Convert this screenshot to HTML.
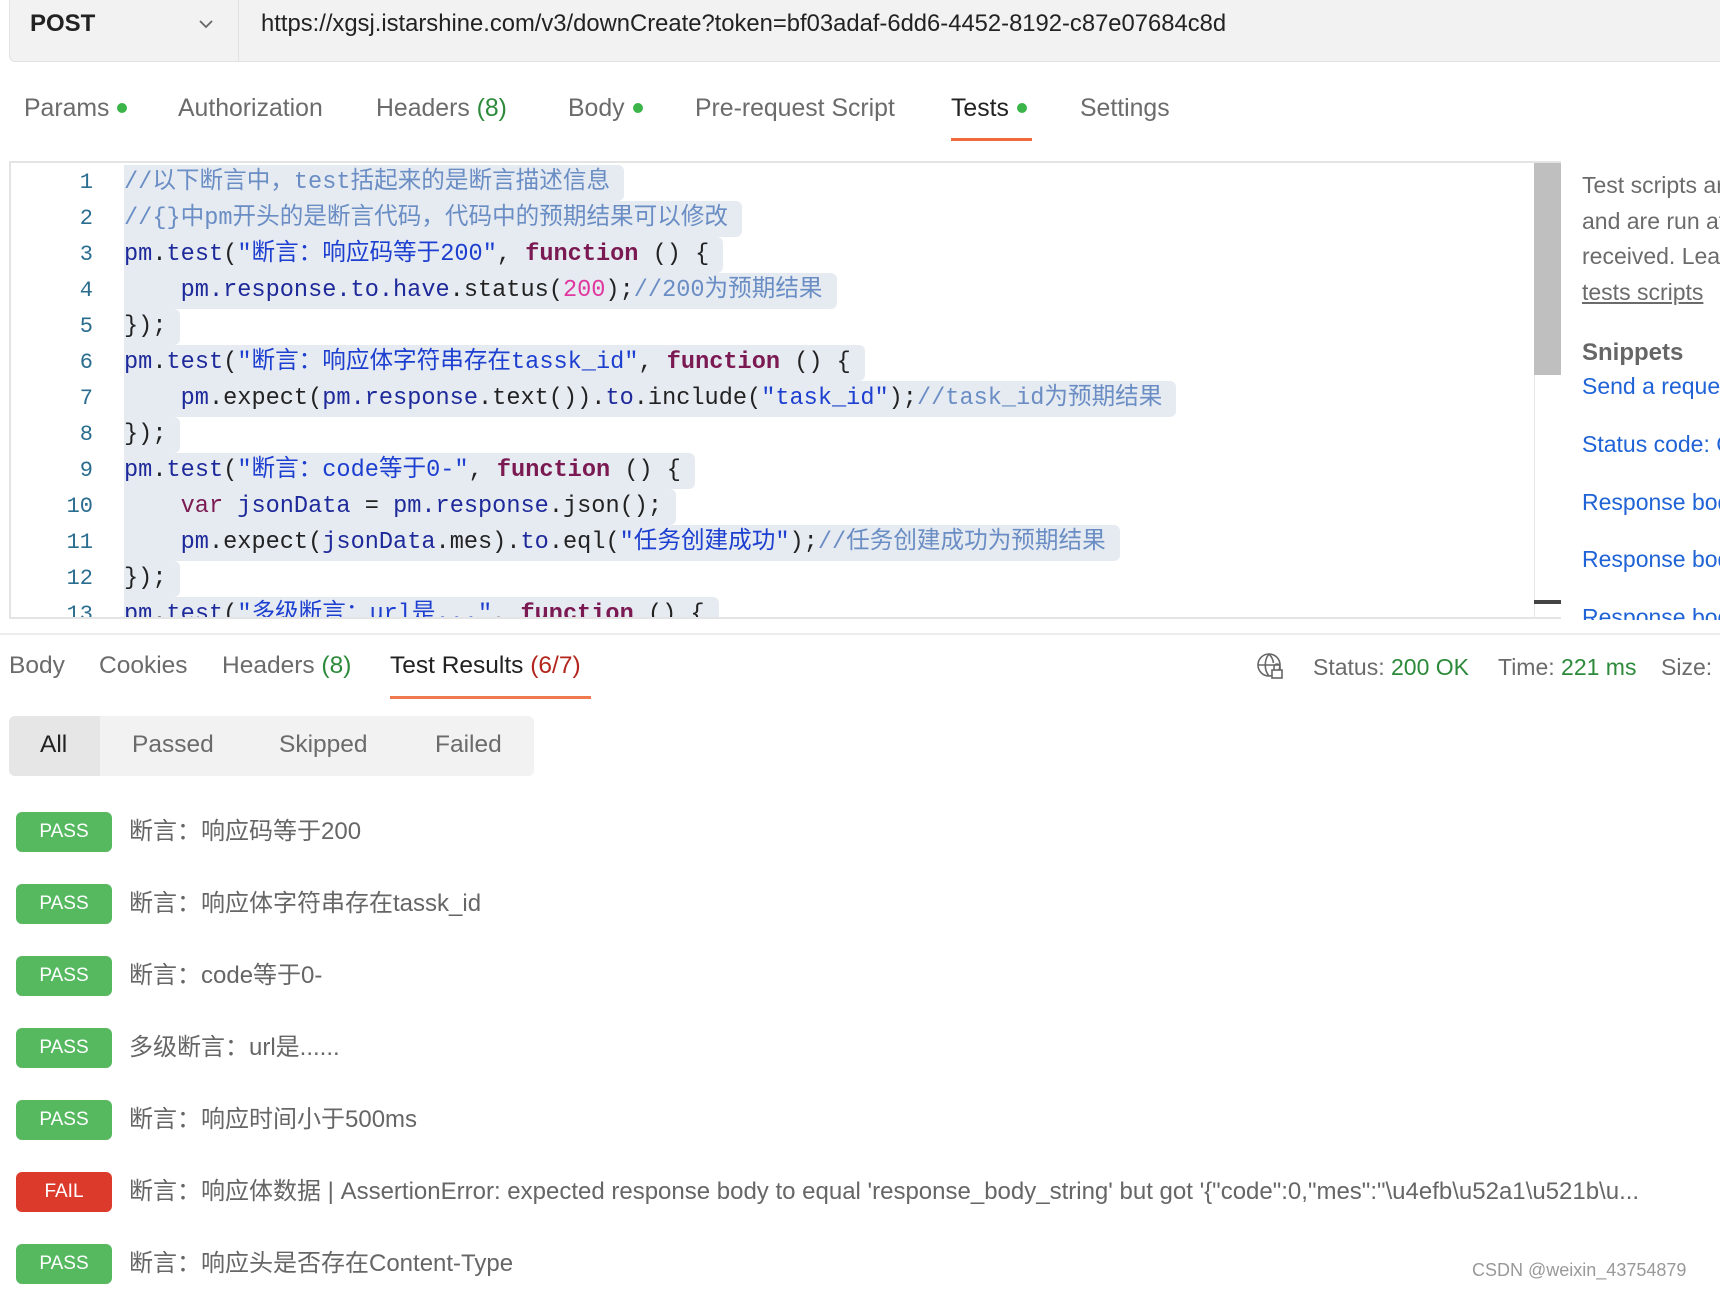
<!DOCTYPE html>
<html><head><meta charset="utf-8"><style>
*{margin:0;padding:0;box-sizing:border-box}
html,body{width:1720px;height:1290px;overflow:hidden}
body{background:#fff;position:relative;font-family:"Liberation Sans","Noto Sans CJK SC",sans-serif;color:#555}
#w{position:absolute;left:0;top:0;width:1720px;height:1290px;overflow:hidden}
.abs{position:absolute;white-space:nowrap}
.urlbar{left:9px;top:-4px;width:1711px;height:66px;background:#f2f2f2;border:1px solid #e2e2e2;border-right:none;border-radius:6px 0 0 6px}
.tab{position:absolute;top:95px;font-size:24.8px;color:#6b6b6b}
.dot{display:inline-block;width:10px;height:10px;border-radius:50%;background:#3bb54a;margin-left:8px;vertical-align:3px}
.g{color:#2d8a3a}
.editor{left:9px;top:161px;width:1552px;height:458px;border:2px solid #e4e4e4;border-right:none;overflow:hidden}
.code{position:absolute;left:0;top:0;font-family:"Liberation Mono","Noto Sans CJK SC",monospace;font-size:23.6px}
.ln{position:absolute;left:40px;width:42px;text-align:right;color:#2a6d8f;font-size:22px;line-height:36px}
.cl{position:absolute;left:113px;height:36px;line-height:36px;background:#e6ebf2;padding-right:14px;border-radius:0 6px 6px 0;color:#222;white-space:pre}
.c{color:#6a8dc4}.p{color:#1e2a9a}.s{color:#1d3fd0}.k{color:#7b1a52;font-weight:bold}.n{color:#e0379f}
.rtab{position:absolute;top:652px;font-size:24.5px;color:#6b6b6b}
.badge{position:absolute;left:16px;width:96px;height:40px;border-radius:6px;background:#56b960;color:#fff;font-size:19px;text-align:center;line-height:40px}
.rt{position:absolute;left:129px;font-size:24px;color:#666;line-height:40px;white-space:nowrap}
.side{font-size:23px}
</style></head><body><div id="w">
<div class="abs urlbar"></div>
<div class="abs" style="left:238px;top:0;width:1px;height:62px;background:#e2e2e2"></div>
<div class="abs" style="left:30px;top:10px;font-size:24px;font-weight:bold;color:#222">POST</div>
<svg class="abs" style="left:198px;top:18px" width="16" height="12"><path d="M2 3l6 6 6-6" fill="none" stroke="#666" stroke-width="1.8"/></svg>
<div class="abs" style="left:261px;top:10px;font-size:23.8px;color:#222">https://xgsj.istarshine.com/v3/downCreate?token=bf03adaf-6dd6-4452-8192-c87e07684c8d</div>

<div class="tab" style="left:24px">Params<span class="dot"></span></div>
<div class="tab" style="left:178px">Authorization</div>
<div class="tab" style="left:376px">Headers <span class="g">(8)</span></div>
<div class="tab" style="left:568px">Body<span class="dot"></span></div>
<div class="tab" style="left:695px">Pre-request Script</div>
<div class="tab" style="left:951px;color:#222">Tests<span class="dot"></span></div>
<div class="tab" style="left:1080px">Settings</div>
<div class="abs" style="left:951px;top:138px;width:81px;height:3px;background:#ef6a3c"></div>

<div class="abs editor">
<div class="code">
<div class="ln" style="top:2px">1</div><div class="ln" style="top:38px">2</div><div class="ln" style="top:74px">3</div><div class="ln" style="top:110px">4</div><div class="ln" style="top:146px">5</div><div class="ln" style="top:182px">6</div><div class="ln" style="top:218px">7</div><div class="ln" style="top:254px">8</div><div class="ln" style="top:290px">9</div><div class="ln" style="top:326px">10</div><div class="ln" style="top:362px">11</div><div class="ln" style="top:398px">12</div><div class="ln" style="top:434px">13</div>
<div class="cl" style="top:2px"><span class="c">//以下断言中，test括起来的是断言描述信息</span></div>
<div class="cl" style="top:38px"><span class="c">//{}中pm开头的是断言代码，代码中的预期结果可以修改</span></div>
<div class="cl" style="top:74px"><span class="p">pm</span>.<span class="p">test</span>(<span class="s">"断言：响应码等于200"</span>, <span class="k">function</span> () {</div>
<div class="cl" style="top:110px">    <span class="p">pm.response.to.have</span>.status(<span class="n">200</span>);<span class="c">//200为预期结果</span></div>
<div class="cl" style="top:146px">});</div>
<div class="cl" style="top:182px"><span class="p">pm</span>.<span class="p">test</span>(<span class="s">"断言：响应体字符串存在tassk_id"</span>, <span class="k">function</span> () {</div>
<div class="cl" style="top:218px">    <span class="p">pm</span>.expect(<span class="p">pm.response</span>.text()).<span class="p">to</span>.include(<span class="s">"task_id"</span>);<span class="c">//task_id为预期结果</span></div>
<div class="cl" style="top:254px">});</div>
<div class="cl" style="top:290px"><span class="p">pm</span>.<span class="p">test</span>(<span class="s">"断言：code等于0-"</span>, <span class="k">function</span> () {</div>
<div class="cl" style="top:326px">    <span class="k" style="font-weight:normal">var</span> <span class="p">jsonData</span> = <span class="p">pm.response</span>.json();</div>
<div class="cl" style="top:362px">    <span class="p">pm</span>.expect(<span class="p">jsonData</span>.mes).<span class="p">to</span>.eql(<span class="s">"任务创建成功"</span>);<span class="c">//任务创建成功为预期结果</span></div>
<div class="cl" style="top:398px">});</div>
<div class="cl" style="top:434px"><span class="p">pm</span>.<span class="p">test</span>(<span class="s">"多级断言：url是..."</span>, <span class="k">function</span> () {</div>
</div>
<div class="abs" style="left:1523px;top:0;width:29px;height:458px;background:#fff;border-left:1px solid #e6e6e6"></div>
<div class="abs" style="left:1523px;top:0;width:29px;height:212px;background:#bfbfbf"></div>
<div class="abs" style="left:1523px;top:437px;width:29px;height:4px;background:#444"></div>
</div>

<div class="abs side" style="left:1582px;top:168px;color:#6b6b6b;line-height:35.5px">Test scripts are<br>and are run after<br>received. Learn<br><span style="text-decoration:underline">tests scripts</span></div>
<div class="abs" style="left:1582px;top:339px;font-size:24px;font-weight:bold;color:#666">Snippets</div>
<div class="abs side" style="left:1582px;top:373px;color:#1f63d6">Send a request</div>
<div class="abs side" style="left:1582px;top:431px;color:#1f63d6">Status code: Code is 200</div>
<div class="abs side" style="left:1582px;top:489px;color:#1f63d6">Response body</div>
<div class="abs side" style="left:1582px;top:546px;color:#1f63d6">Response body</div>
<div class="abs side" style="left:1582px;top:604px;color:#1f63d6;height:16px;overflow:hidden">Response body</div>
<div class="abs" style="left:0;top:633px;width:1720px;height:2px;background:#ececec"></div>

<div class="rtab" style="left:9px">Body</div>
<div class="rtab" style="left:99px">Cookies</div>
<div class="rtab" style="left:222px">Headers <span class="g">(8)</span></div>
<div class="rtab" style="left:390px;color:#222">Test Results <span style="color:#b3261e">(6/7)</span></div>
<div class="abs" style="left:390px;top:696px;width:201px;height:3px;background:#ef7a4d"></div>
<svg class="abs" style="left:1256px;top:652px" width="30" height="30" viewBox="0 0 30 30" fill="none" stroke="#666" stroke-width="1.6"><circle cx="13" cy="13" r="11"/><path d="M2 13h22M13 2c-5 6-5 16 0 22M13 2c3 3 4 6 4.5 9"/><rect x="16" y="18" width="10" height="8" fill="#fff"/><path d="M18 18v-3a3 3 0 016 0v3"/></svg>
<div class="abs" style="left:1313px;top:654px;font-size:23px;color:#6b6b6b">Status: <span class="g">200 OK</span></div>
<div class="abs" style="left:1498px;top:654px;font-size:23px;color:#6b6b6b">Time: <span class="g">221 ms</span></div>
<div class="abs" style="left:1661px;top:654px;font-size:23px;color:#6b6b6b">Size:</div>

<div class="abs" style="left:9px;top:716px;width:525px;height:60px;background:#f2f2f2;border-radius:6px"></div>
<div class="abs" style="left:9px;top:716px;width:91px;height:60px;background:#e6e6e6;border-radius:6px 0 0 6px"></div>
<div class="abs" style="left:40px;top:731px;font-size:24.5px;color:#222">All</div>
<div class="abs" style="left:132px;top:731px;font-size:24.5px;color:#6b6b6b">Passed</div>
<div class="abs" style="left:279px;top:731px;font-size:24.5px;color:#6b6b6b">Skipped</div>
<div class="abs" style="left:435px;top:731px;font-size:24.5px;color:#6b6b6b">Failed</div>

<div class="badge" style="top:812px">PASS</div><div class="rt" style="top:812px">断言：响应码等于200</div>
<div class="badge" style="top:884px">PASS</div><div class="rt" style="top:884px">断言：响应体字符串存在tassk_id</div>
<div class="badge" style="top:956px">PASS</div><div class="rt" style="top:956px">断言：code等于0-</div>
<div class="badge" style="top:1028px">PASS</div><div class="rt" style="top:1028px">多级断言：url是......</div>
<div class="badge" style="top:1100px">PASS</div><div class="rt" style="top:1100px">断言：响应时间小于500ms</div>
<div class="badge" style="top:1172px;background:#dc3b2c">FAIL</div><div class="rt" style="top:1172px;width:1591px;overflow:hidden">断言：响应体数据 | AssertionError: expected response body to equal 'response_body_string' but got '{"code":0,"mes":"\u4efb\u52a1\u521b\u...</div>
<div class="badge" style="top:1244px">PASS</div><div class="rt" style="top:1244px">断言：响应头是否存在Content-Type</div>
<div class="abs" style="left:1472px;top:1260px;font-size:18px;color:#999">CSDN @weixin_43754879</div>
</div></body></html>
